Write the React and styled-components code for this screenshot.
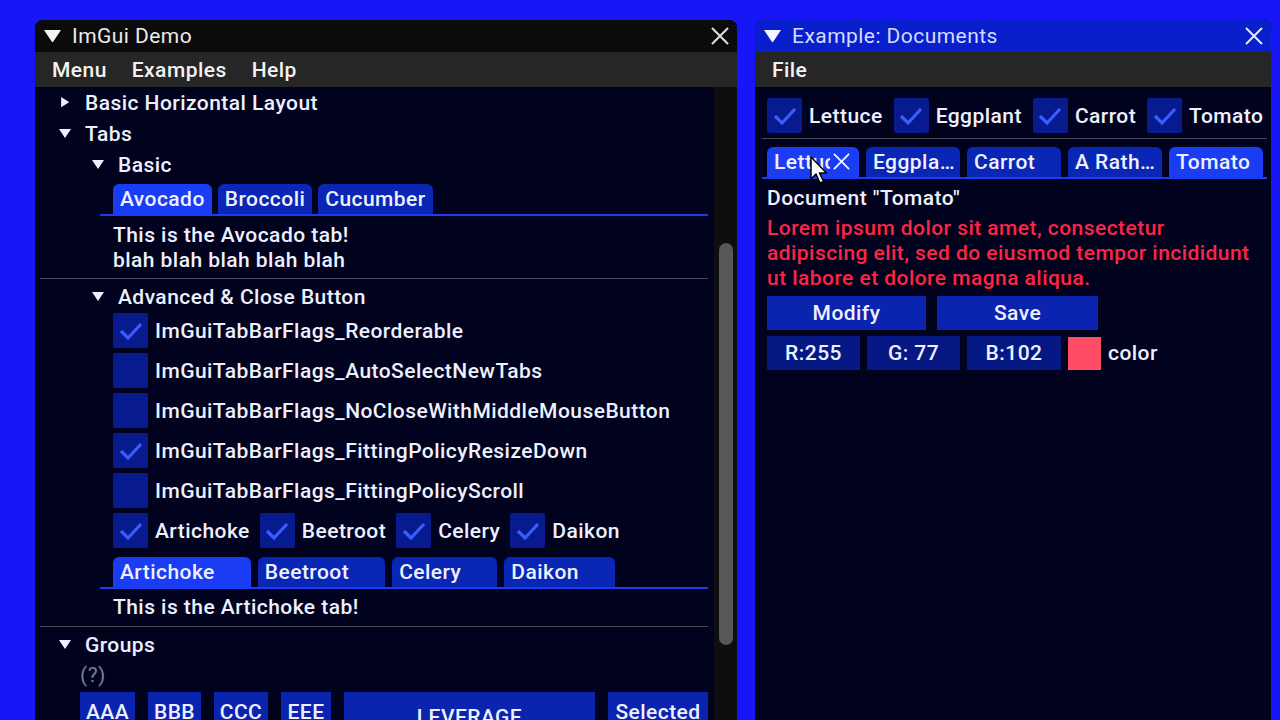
import React from "react";
import styled, { createGlobalStyle } from "styled-components";

const GlobalStyle = createGlobalStyle`
  html, body {
    margin: 0;
    padding: 0;
    background: #1616f6;
  }
  * {
    box-sizing: border-box;
  }
`;

const Desktop = styled.div`
  position: relative;
  width: 1280px;
  height: 720px;
  overflow: hidden;
  display: flex;
  align-items: flex-start;
  gap: 18px;
  padding: 20px 0 0 35px;
  font-family: Roboto, "Liberation Sans", sans-serif;
  font-weight: 500;
  font-size: 21px;
  letter-spacing: 0.45px;
  color: #eef0ff;
`;

const Window = styled.div`
  width: ${(p) => p.width}px;
  height: 700px;
  flex-shrink: 0;
  display: flex;
  flex-direction: column;
  background: #01031e;
  border-radius: 8px 8px 0 0;
  overflow: hidden;
`;

const TitleBar = styled.div`
  height: 32px;
  flex-shrink: 0;
  display: flex;
  align-items: center;
  gap: 11px;
  padding: 0 8px 0 9px;
  background: ${(p) => p.bg};
  color: ${(p) => p.fg};
  font-weight: 400;
`;

const TitleText = styled.span`
  flex: 1;
`;

const MenuBar = styled.div`
  height: 35px;
  flex-shrink: 0;
  display: flex;
  align-items: center;
  gap: 25px;
  padding-left: 17px;
  background: #262626;
  color: #f2f2f2;
`;

const Body = styled.div`
  flex: 1;
  display: flex;
  min-height: 0;
`;

const Content = styled.div`
  flex: 1;
  min-width: 0;
  padding: ${(p) => p.pad};
  overflow: hidden;
`;

const ScrollTrack = styled.div`
  width: 23px;
  flex-shrink: 0;
  background: #0e0e10;
  display: flex;
  justify-content: center;
`;

const ScrollThumb = styled.div`
  width: 14px;
  height: 402px;
  margin-top: 156px;
  border-radius: 7px;
  background: #575757;
`;

const TreeRow = styled.div`
  height: 31px;
  display: flex;
  align-items: center;
  gap: 14px;
  padding-left: ${(p) => p.indent}px;
`;

const ArrowBox = styled.span`
  width: 12px;
  display: flex;
  justify-content: center;
  align-items: center;
`;

const Block = styled.div`
  margin-left: ${(p) => p.indent || 0}px;
  margin-top: ${(p) => p.top || 0}px;
`;

const TextLine = styled.div`
  height: 25px;
  line-height: 25px;
  white-space: nowrap;
  color: ${(p) => p.color || "inherit"};
`;

const TabBar = styled.div`
  display: flex;
  gap: ${(p) => p.gap}px;
  margin-left: ${(p) => p.indent || 0}px;
  margin-top: ${(p) => p.top || 0}px;
  padding-left: ${(p) => p.lead || 0}px;
  border-bottom: 2px solid #1a3cf2;
`;

const Tab = styled.div`
  position: relative;
  height: 30px;
  line-height: 30px;
  padding: 0 ${(p) => (p.closable ? 36 : 7)}px 0 7px;
  width: ${(p) => (p.w ? `${p.w}px` : "auto")};
  flex-shrink: 0;
  border-radius: 6px 6px 0 0;
  background: ${(p) => (p.active ? "#1a3cf2" : "#0a26b4")};
  white-space: nowrap;
  overflow: hidden;
  display: flex;
  align-items: center;
`;

const Clip = styled.span`
  display: inline-block;
  width: ${(p) => p.w}px;
  overflow: hidden;
`;

const Separator = styled.div`
  height: 1px;
  background: #4a4a55;
  margin: ${(p) => p.margin};
`;

const CheckList = styled.div`
  display: flex;
  flex-direction: column;
  gap: 5px;
  margin-left: ${(p) => p.indent}px;
  margin-top: ${(p) => p.top || 0}px;
`;

const CheckRowWrap = styled.div`
  display: flex;
  gap: ${(p) => p.gap}px;
  margin-top: ${(p) => p.top || 0}px;
`;

const CheckItem = styled.label`
  display: flex;
  align-items: center;
  gap: 7px;
  white-space: nowrap;
`;

const Box = styled.span`
  width: 35px;
  height: 35px;
  flex-shrink: 0;
  background: #071a8e;
  border-radius: 2px;
  display: flex;
  align-items: center;
  justify-content: center;
`;

const HelpMark = styled.div`
  height: 25px;
  line-height: 25px;
  color: #7a7f9c;
  font-weight: 400;
  margin-top: 3px;
`;

const ButtonRow = styled.div`
  display: flex;
  align-items: ${(p) => p.align || "flex-start"};
  gap: ${(p) => p.gap}px;
  margin-top: ${(p) => p.top || 0}px;
`;

const Button = styled.div`
  width: ${(p) => (p.w ? `${p.w}px` : "auto")};
  height: ${(p) => p.h || 34}px;
  flex-shrink: 0;
  padding: 0 ${(p) => (p.w ? 0 : 7)}px;
  background: ${(p) => p.bg || "#0a24b0"};
  display: flex;
  align-items: center;
  justify-content: center;
  white-space: nowrap;
`;

const Swatch = styled.div`
  width: 33px;
  height: 33px;
  background: #ff4d66;
`;

const Cursor = styled.svg`
  position: absolute;
  left: 810px;
  top: 156px;
`;

const TabClose = styled.span`
  position: absolute;
  right: 9px;
  top: 6px;
  display: flex;
`;

const CollapseArrow = ({ open, size = 12, color = "#eef0ff" }) =>
  open ? (
    <svg width={size} height={size * 0.75} viewBox="0 0 12 9">
      <polygon points="0,0 12,0 6,9" fill={color} />
    </svg>
  ) : (
    <svg width={size * 0.7} height={size * 0.85} viewBox="0 0 8 10">
      <polygon points="0,0 8,5 0,10" fill={color} />
    </svg>
  );

const CloseIcon = ({ size = 18, color = "#e0e0e0" }) => (
  <svg width={size} height={size} viewBox="0 0 18 18">
    <path d="M1 1 L17 17 M17 1 L1 17" stroke={color} strokeWidth="2" />
  </svg>
);

const Check = () => (
  <svg width="24" height="20" viewBox="0 0 24 20">
    <polyline
      points="2,10 9,17 22,3"
      fill="none"
      stroke="#3a5dff"
      strokeWidth="3.2"
    />
  </svg>
);

const CheckBox = ({ checked, label }) => (
  <CheckItem>
    <Box>{checked && <Check />}</Box>
    {label}
  </CheckItem>
);

const flags = [
  ["ImGuiTabBarFlags_Reorderable", true],
  ["ImGuiTabBarFlags_AutoSelectNewTabs", false],
  ["ImGuiTabBarFlags_NoCloseWithMiddleMouseButton", false],
  ["ImGuiTabBarFlags_FittingPolicyResizeDown", true],
  ["ImGuiTabBarFlags_FittingPolicyScroll", false],
];

const veggies = ["Artichoke", "Beetroot", "Celery", "Daikon"];

const ImGuiDemo = () => (
  <Window width={702}>
    <TitleBar bg="#0b0b0b" fg="#ececec">
      <CollapseArrow open size={17} color="#f4f4f4" />
      <TitleText>ImGui Demo</TitleText>
      <CloseIcon />
    </TitleBar>
    <MenuBar>
      <span>Menu</span>
      <span>Examples</span>
      <span>Help</span>
    </MenuBar>
    <Body>
      <Content pad="0 6px 0 5px">
        <TreeRow indent={19}>
          <ArrowBox>
            <CollapseArrow />
          </ArrowBox>
          Basic Horizontal Layout
        </TreeRow>
        <TreeRow indent={19}>
          <ArrowBox>
            <CollapseArrow open />
          </ArrowBox>
          Tabs
        </TreeRow>
        <TreeRow indent={52}>
          <ArrowBox>
            <CollapseArrow open />
          </ArrowBox>
          Basic
        </TreeRow>
        <TabBar gap={6} indent={60} lead={13} top={4}>
          <Tab active>Avocado</Tab>
          <Tab>Broccoli</Tab>
          <Tab>Cucumber</Tab>
        </TabBar>
        <Block indent={73} top={7}>
          <TextLine>This is the Avocado tab!</TextLine>
          <TextLine>blah blah blah blah blah</TextLine>
        </Block>
        <Separator margin="5px 0 2px" />
        <TreeRow indent={52}>
          <ArrowBox>
            <CollapseArrow open />
          </ArrowBox>
          Advanced &amp; Close Button
        </TreeRow>
        <CheckList indent={73} top={1}>
          {flags.map(([name, on]) => (
            <CheckBox key={name} checked={on} label={name} />
          ))}
          <CheckRowWrap gap={10}>
            {veggies.map((v) => (
              <CheckBox key={v} checked label={v} />
            ))}
          </CheckRowWrap>
        </CheckList>
        <TabBar gap={7} indent={60} lead={13} top={9}>
          {veggies.map((v, i) => (
            <Tab key={v} active={i === 0} closable>
              {v}
            </Tab>
          ))}
        </TabBar>
        <Block indent={73} top={6}>
          <TextLine>This is the Artichoke tab!</TextLine>
        </Block>
        <Separator margin="6px 0 2px" />
        <TreeRow indent={19}>
          <ArrowBox>
            <CollapseArrow open />
          </ArrowBox>
          Groups
        </TreeRow>
        <Block indent={40}>
          <HelpMark>(?)</HelpMark>
          <ButtonRow gap={13} top={4}>
            <Button w={55} h={40}>AAA</Button>
            <Button w={53} h={40}>BBB</Button>
            <Button w={54} h={40}>CCC</Button>
            <Button w={50} h={40}>EEE</Button>
            <Button w={251} h={50}>LEVERAGE</Button>
            <Button w={100} h={40}>Selected</Button>
          </ButtonRow>
        </Block>
      </Content>
      <ScrollTrack>
        <ScrollThumb />
      </ScrollTrack>
    </Body>
  </Window>
);

const docTabs = [
  { label: "Eggpla…" },
  { label: "Carrot" },
  { label: "A Rath…" },
  { label: "Tomato", active: true },
];

const DocumentsWindow = () => (
  <Window width={516}>
    <TitleBar bg="#0a1fcc" fg="#d6dcff">
      <CollapseArrow open size={17} color="#f4f6ff" />
      <TitleText>Example: Documents</TitleText>
      <CloseIcon color="#e6eaff" />
    </TitleBar>
    <MenuBar>
      <span>File</span>
    </MenuBar>
    <Content pad="11px 4px 0 12px">
      <CheckRowWrap gap={11}>
        <CheckBox checked label="Lettuce" />
        <CheckBox checked label="Eggplant" />
        <CheckBox checked label="Carrot" />
        <CheckBox checked label="Tomato" />
      </CheckRowWrap>
      <Separator margin="5px 0 8px -5px" />
      <TabBar gap={7} indent={-5} lead={5}>
        <Tab active w={92}>
          <Clip w={56}>Lettuce</Clip>
          <TabClose>
            <CloseIcon size={17} color="#f0f2ff" />
          </TabClose>
        </Tab>
        {docTabs.map((t) => (
          <Tab key={t.label} active={t.active} w={94}>
            {t.label}
          </Tab>
        ))}
      </TabBar>
      <Block top={7}>
        <TextLine>Document "Tomato"</TextLine>
      </Block>
      <Block top={5}>
        <TextLine color="#ff2344">Lorem ipsum dolor sit amet, consectetur</TextLine>
        <TextLine color="#ff2344">
          adipiscing elit, sed do eiusmod tempor incididunt
        </TextLine>
        <TextLine color="#ff2344">ut labore et dolore magna aliqua.</TextLine>
      </Block>
      <ButtonRow gap={11} top={5}>
        <Button w={159}>Modify</Button>
        <Button w={161}>Save</Button>
      </ButtonRow>
      <ButtonRow gap={7} top={6} align="center">
        <Button w={93} bg="#061883">R:255</Button>
        <Button w={93} bg="#061883">G: 77</Button>
        <Button w={94} bg="#061883">B:102</Button>
        <Swatch />
        <TextLine>color</TextLine>
      </ButtonRow>
    </Content>
  </Window>
);

const App = () => (
  <>
    <GlobalStyle />
    <Desktop>
      <ImGuiDemo />
      <DocumentsWindow />
      <Cursor width="20" height="30" viewBox="0 0 20 30">
        <path
          d="M1 1 L1 23 L6 18 L10 27 L13.5 25.5 L9.5 17 L16.5 17 Z"
          fill="#ffffff"
          stroke="#000000"
          strokeWidth="1.5"
          strokeLinejoin="round"
        />
      </Cursor>
    </Desktop>
  </>
);

export default App;
